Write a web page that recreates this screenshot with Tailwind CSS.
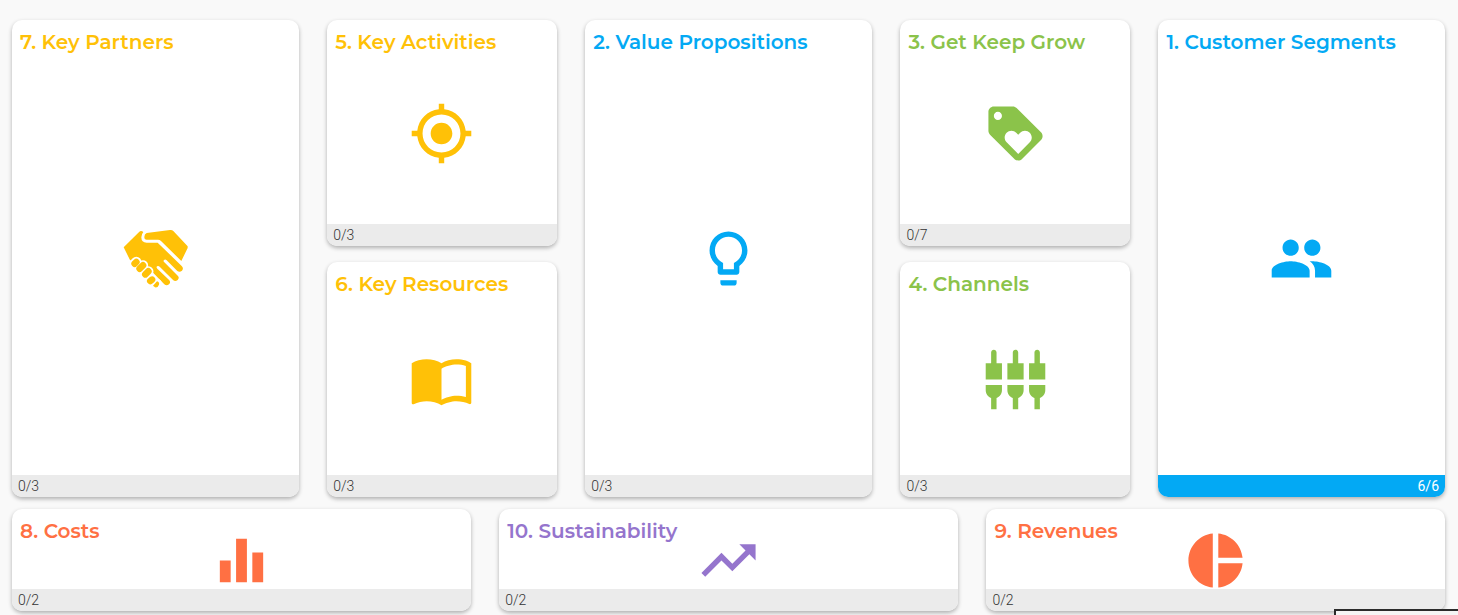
<!DOCTYPE html>
<html lang="en">
  <head>
    <meta charset="UTF-8" />
    <meta name="viewport" content="width=device-width, initial-scale=1.0" />
    <title>Business Model Canvas</title>
    <script src="https://cdn.jsdelivr.net/npm/@tailwindcss/browser@4"></script>
  </head>
  <body class="min-h-screen bg-[#f9f9f9] pt-5 pr-[13px] pb-1 pl-3 font-[Montserrat,Inter,sans-serif]">
    <main class="flex flex-col gap-3">
      <!-- Upper blocks -->
      <div class="grid grid-cols-[5fr_4fr_5fr_4fr_5fr] gap-x-[2%]">
        <section class="flex flex-col overflow-hidden rounded-[10px] bg-white shadow-[0_2px_4px_rgba(0,0,0,0.3)] text-[#ffc107]">
          <h2 class="h-[22px] px-2 pt-2.5 text-xl leading-6 font-semibold whitespace-nowrap">7. Key Partners</h2>
          <div class="flex min-h-0 flex-1 items-center justify-center">
            <svg class="size-[65px] shrink-0" viewBox="37 33 195 195" fill="currentColor" aria-hidden="true">
              <path d="M39 97L86 50Q91 45 98 51Q92 58 92 67Q92 83 108 83H141L213 153Q220 160 214 167Q207 173 200 168L168 136Q164 132 160 135Q157 138 161 142L202 183Q207 189 201 195Q194 201 188 196L147 155Q143 151 139 154Q136 157 140 161L176 196Q181 203 175 208Q168 214 161 208L120 166L58 135Z" />
              <path d="M108 54L178 45Q184 44 188 48L231 94V99L212 138L151 78Q147 74 142 74H108Q101 74 101 66Q101 57 108 54Z" />
              <g class="stroke-white" stroke-width="31" stroke-linecap="round">
                <path d="M72 146L77 141M88 161L97 151M104 178L113 169M119 198L124 194M134 210L138 206" />
              </g>
              <g stroke="currentColor" stroke-width="20" stroke-linecap="round">
                <path d="M72 146L77 141M87 161L97 151M104 178L113 169M119 198L124 194" />
              </g>
              <path d="M127 212L139 199Q147 201 145 209Q141 219 133 217Z" />
            </svg>
          </div>
          <p class="bg-[#ebebeb] px-1.5 font-[Roboto] text-sm leading-[22px] font-light text-[#333]">0/3</p>
        </section>

        <div class="grid grid-rows-[226px_235px] gap-4">
          <section class="flex flex-col overflow-hidden rounded-[10px] bg-white shadow-[0_2px_4px_rgba(0,0,0,0.3)] text-[#ffc107]">
            <h2 class="h-[22px] px-2 pt-2.5 text-xl leading-6 font-semibold whitespace-nowrap">5. Key Activities</h2>
            <div class="flex min-h-0 flex-1 items-center justify-center">
              <svg class="size-[65px] shrink-0" viewBox="0 0 24 24" fill="currentColor" aria-hidden="true">
                <path d="M12 8c-2.21 0-4 1.79-4 4s1.79 4 4 4 4-1.79 4-4-1.79-4-4-4zm8.94 3c-.46-4.17-3.77-7.48-7.94-7.94V1h-2v2.06C6.83 3.52 3.52 6.83 3.06 11H1v2h2.06c.46 4.17 3.77 7.48 7.94 7.94V23h2v-2.06c4.17-.46 7.48-3.77 7.94-7.94H23v-2h-2.06zM12 19c-3.87 0-7-3.13-7-7s3.13-7 7-7 7 3.13 7 7-3.13 7-7 7z" />
              </svg>
            </div>
            <p class="bg-[#ebebeb] px-1.5 font-[Roboto] text-sm leading-[22px] font-light text-[#333]">0/3</p>
          </section>
          <section class="flex flex-col overflow-hidden rounded-[10px] bg-white shadow-[0_2px_4px_rgba(0,0,0,0.3)] text-[#ffc107]">
            <h2 class="h-[22px] px-2 pt-2.5 text-xl leading-6 font-semibold whitespace-nowrap">6. Key Resources</h2>
            <div class="flex min-h-0 flex-1 items-center justify-center">
              <svg class="size-[65px] shrink-0" viewBox="0 0 24 24" fill="currentColor" aria-hidden="true">
                <path d="M21 5c-1.11-.35-2.33-.5-3.5-.5-1.95 0-4.05.4-5.5 1.5-1.45-1.1-3.55-1.5-5.5-1.5S2.45 4.9 1 6v14.65c0 .25.25.5.5.5.1 0 .15-.05.25-.05C3.1 20.45 5.05 20 6.5 20c1.95 0 4.05.4 5.5 1.5 1.35-.85 3.8-1.5 5.5-1.5 1.65 0 3.35.3 4.75 1.05.1.05.15.05.25.05.25 0 .5-.25.5-.5V6c-.6-.45-1.25-.75-2-1zm0 13.5c-1.1-.35-2.3-.5-3.5-.5-1.7 0-4.15.65-5.5 1.5V8c1.35-.85 3.8-1.5 5.5-1.5 1.2 0 2.4.15 3.5.5v11.5z" />
              </svg>
            </div>
            <p class="bg-[#ebebeb] px-1.5 font-[Roboto] text-sm leading-[22px] font-light text-[#333]">0/3</p>
          </section>
        </div>

        <section class="flex flex-col overflow-hidden rounded-[10px] bg-white shadow-[0_2px_4px_rgba(0,0,0,0.3)] text-[#03a9f4]">
          <h2 class="h-[22px] px-2 pt-2.5 text-xl leading-6 font-semibold whitespace-nowrap">2. Value Propositions</h2>
          <div class="flex min-h-0 flex-1 items-center justify-center">
            <svg class="size-[65px] shrink-0" viewBox="0 0 24 24" fill="currentColor" aria-hidden="true">
              <path d="M9 21c0 .55.45 1 1 1h4c.55 0 1-.45 1-1v-1H9v1zm3-19C8.14 2 5 5.14 5 9c0 2.38 1.19 4.47 3 5.74V17c0 .55.45 1 1 1h6c.55 0 1-.45 1-1v-2.26c1.81-1.27 3-3.36 3-5.74 0-3.86-3.14-7-7-7zm2.85 11.1l-.85.6V16h-4v-2.3l-.85-.6C7.8 12.16 7 10.63 7 9c0-2.76 2.24-5 5-5s5 2.24 5 5c0 1.63-.8 3.16-2.15 4.1z" />
            </svg>
          </div>
          <p class="bg-[#ebebeb] px-1.5 font-[Roboto] text-sm leading-[22px] font-light text-[#333]">0/3</p>
        </section>

        <div class="grid grid-rows-[226px_235px] gap-4">
          <section class="flex flex-col overflow-hidden rounded-[10px] bg-white shadow-[0_2px_4px_rgba(0,0,0,0.3)] text-[#8bc34a]">
            <h2 class="h-[22px] px-2 pt-2.5 text-xl leading-6 font-semibold whitespace-nowrap">3. Get Keep Grow</h2>
            <div class="flex min-h-0 flex-1 items-center justify-center">
              <svg class="size-[65px] shrink-0" viewBox="0 0 24 24" fill="currentColor" aria-hidden="true">
                <path d="M21.41 11.58l-9-9C12.05 2.22 11.55 2 11 2H4c-1.1 0-2 .9-2 2v7c0 .55.22 1.05.59 1.42l9 9c.36.36.86.58 1.41.58.55 0 1.05-.22 1.41-.59l7-7c.37-.36.59-.86.59-1.41 0-.55-.23-1.06-.59-1.42zM5.5 7C4.67 7 4 6.33 4 5.5S4.67 4 5.5 4 7 4.67 7 5.5 6.33 7 5.5 7zm11.77 8.27L13 19.54l-4.27-4.27C8.28 14.81 8 14.19 8 13.5c0-1.38 1.12-2.5 2.5-2.5.69 0 1.32.28 1.77.74l.73.72.73-.73c.45-.45 1.08-.73 1.77-.73 1.38 0 2.5 1.12 2.5 2.5 0 .69-.28 1.32-.73 1.77z" />
              </svg>
            </div>
            <p class="bg-[#ebebeb] px-1.5 font-[Roboto] text-sm leading-[22px] font-light text-[#333]">0/7</p>
          </section>
          <section class="flex flex-col overflow-hidden rounded-[10px] bg-white shadow-[0_2px_4px_rgba(0,0,0,0.3)] text-[#8bc34a]">
            <h2 class="h-[22px] px-2 pt-2.5 text-xl leading-6 font-semibold whitespace-nowrap">4. Channels</h2>
            <div class="flex min-h-0 flex-1 items-center justify-center">
              <svg class="size-[65px] shrink-0" viewBox="0 0 24 24" fill="currentColor" aria-hidden="true">
                <path d="M5 2c0-.55-.45-1-1-1s-1 .45-1 1v4H1v6h6V6H5V2zm4 14c0 1.3.84 2.4 2 2.82V23h2v-4.18c1.16-.41 2-1.51 2-2.82v-2H9v2zm-8 0c0 1.3.84 2.4 2 2.82V23h2v-4.18C6.16 18.4 7 17.3 7 16v-2H1v2zM21 6V2c0-.55-.45-1-1-1s-1 .45-1 1v4h-2v6h6V6h-2zm-8-4c0-.55-.45-1-1-1s-1 .45-1 1v4H9v6h6V6h-2V2zm4 14c0 1.3.84 2.4 2 2.82V23h2v-4.18c1.16-.41 2-1.51 2-2.82v-2h-6v2z" />
              </svg>
            </div>
            <p class="bg-[#ebebeb] px-1.5 font-[Roboto] text-sm leading-[22px] font-light text-[#333]">0/3</p>
          </section>
        </div>

        <section class="flex flex-col overflow-hidden rounded-[10px] bg-white shadow-[0_2px_4px_rgba(0,0,0,0.3)] text-[#03a9f4]">
          <h2 class="h-[22px] px-2 pt-2.5 text-xl leading-6 font-semibold whitespace-nowrap">1. Customer Segments</h2>
          <div class="flex min-h-0 flex-1 items-center justify-center">
            <svg class="size-[65px] shrink-0" viewBox="0 0 24 24" fill="currentColor" aria-hidden="true">
              <path d="M16 11c1.66 0 2.99-1.34 2.99-3S17.66 5 16 5c-1.66 0-3 1.34-3 3s1.34 3 3 3zm-8 0c1.66 0 2.99-1.34 2.99-3S9.66 5 8 5C6.34 5 5 6.34 5 8s1.34 3 3 3zm0 2c-2.33 0-7 1.17-7 3.5V19h14v-2.5c0-2.33-4.67-3.5-7-3.5zm8 0c-.29 0-.62.02-.97.05 1.16.84 1.97 1.97 1.97 3.45V19h6v-2.5c0-2.33-4.67-3.5-7-3.5z" />
            </svg>
          </div>
          <p class="bg-[#03a9f4] px-1.5 text-right font-[Roboto] text-sm leading-[22px] text-white">6/6</p>
        </section>
      </div>

      <!-- Bottom blocks -->
      <div class="grid grid-cols-3 grid-rows-[102px] gap-x-[2%]">
        <section class="flex flex-col overflow-hidden rounded-[10px] bg-white shadow-[0_2px_4px_rgba(0,0,0,0.3)] text-[#ff7043]">
          <h2 class="h-[22px] px-2 pt-2.5 text-xl leading-6 font-semibold whitespace-nowrap">8. Costs</h2>
          <div class="flex min-h-0 flex-1 items-center justify-center">
            <svg class="size-[65px] shrink-0" viewBox="0 0 24 24" fill="currentColor" aria-hidden="true">
              <path d="M10 20h4V4h-4v16zm-6 0h4v-8H4v8zM16 9v11h4V9h-4z" />
            </svg>
          </div>
          <p class="bg-[#ebebeb] px-1.5 font-[Roboto] text-sm leading-[22px] font-light text-[#333]">0/2</p>
        </section>
        <section class="flex flex-col overflow-hidden rounded-[10px] bg-white shadow-[0_2px_4px_rgba(0,0,0,0.3)] text-[#9575cd]">
          <h2 class="h-[22px] px-2 pt-2.5 text-xl leading-6 font-semibold whitespace-nowrap">10. Sustainability</h2>
          <div class="flex min-h-0 flex-1 items-center justify-center">
            <svg class="size-[65px] shrink-0" viewBox="0 0 24 24" fill="currentColor" aria-hidden="true">
              <path d="M16 6l2.29 2.29-4.88 4.88-4-4L2 16.59 3.41 18l6-6 4 4 6.3-6.29L22 12V6z" />
            </svg>
          </div>
          <p class="bg-[#ebebeb] px-1.5 font-[Roboto] text-sm leading-[22px] font-light text-[#333]">0/2</p>
        </section>
        <section class="flex flex-col overflow-hidden rounded-[10px] bg-white shadow-[0_2px_4px_rgba(0,0,0,0.3)] text-[#ff7043]">
          <h2 class="h-[22px] px-2 pt-2.5 text-xl leading-6 font-semibold whitespace-nowrap">9. Revenues</h2>
          <div class="flex min-h-0 flex-1 items-center justify-center">
            <svg class="size-[65px] shrink-0" viewBox="0 0 24 24" fill="currentColor" aria-hidden="true">
              <path d="M11 2v20c-5.07-.5-9-4.79-9-10s3.93-9.5 9-10zm2.03 0v8.99H22c-.47-4.74-4.24-8.52-8.97-8.99zm0 11.01V22c4.74-.47 8.5-4.25 8.97-8.99h-8.97z" />
            </svg>
          </div>
          <p class="bg-[#ebebeb] px-1.5 font-[Roboto] text-sm leading-[22px] font-light text-[#333]">0/2</p>
        </section>
      </div>
    </main>

    <!-- Top edge of the docked panel -->
    <div class="fixed right-0 bottom-0 h-1.5 w-[124px] border-t-2 border-l-2 border-[#2b2b2b] bg-[#f5f5f5]"></div>
  </body>
</html>
